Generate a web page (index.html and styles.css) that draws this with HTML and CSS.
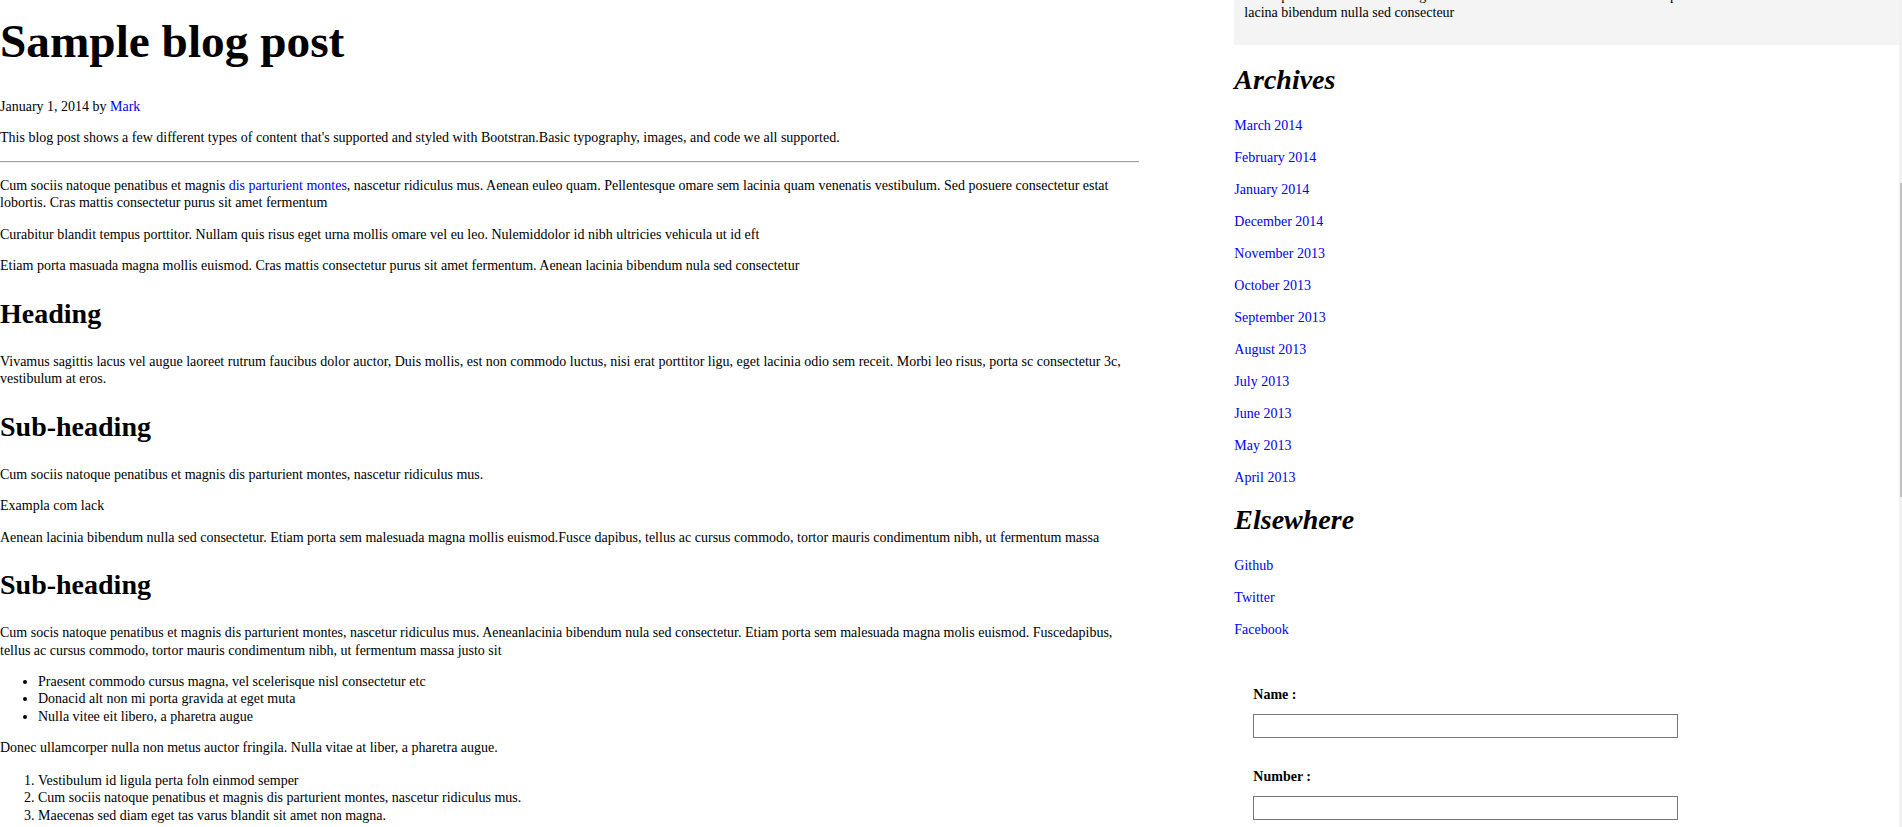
FILE: index.html
```html
<!DOCTYPE html>
<html lang="en">
<head>
<meta charset="utf-8">
<title>Sample blog post</title>
<link rel="stylesheet" href="styles.css">
</head>
<body>
<div class="page">
  <main class="post">
    <h1 class="post-title">Sample blog post</h1>
    <p class="post-meta">January 1, 2014 by <a href="#">Mark</a></p>
    <p>This blog post shows a few different types of content that's supported and styled with Bootstran.Basic typography, images, and code we all supported.</p>
    <hr class="rule">
    <p>Cum sociis natoque penatibus et magnis <a href="#">dis parturient montes</a>, nascetur ridiculus mus. Aenean euleo quam. Pellentesque omare sem lacinia quam venenatis vestibulum. Sed posuere consectetur estat lobortis. Cras mattis consectetur purus sit amet fermentum</p>
    <p>Curabitur blandit tempus porttitor. Nullam quis risus eget urna mollis omare vel eu leo. Nulemiddolor id nibh ultricies vehicula ut id eft</p>
    <p>Etiam porta masuada magna mollis euismod. Cras mattis consectetur purus sit amet fermentum. Aenean lacinia bibendum nula sed consectetur</p>
    <h2 class="section-title">Heading</h2>
    <p>Vivamus sagittis lacus vel augue laoreet rutrum faucibus dolor auctor, Duis mollis, est non commodo luctus, nisi erat porttitor ligu, eget lacinia odio sem receit. Morbi leo risus, porta sc consectetur 3c, vestibulum at eros.</p>
    <h2 class="section-title">Sub-heading</h2>
    <p>Cum sociis natoque penatibus et magnis dis parturient montes, nascetur ridiculus mus.</p>
    <p>Exampla com lack</p>
    <p>Aenean lacinia bibendum nulla sed consectetur. Etiam porta sem malesuada magna mollis euismod.Fusce dapibus, tellus ac cursus commodo, tortor mauris condimentum nibh, ut fermentum massa</p>
    <h2 class="section-title">Sub-heading</h2>
    <p>Cum socis natoque penatibus et magnis dis parturient montes, nascetur ridiculus mus. Aeneanlacinia bibendum nula sed consectetur. Etiam porta sem malesuada magna molis euismod. Fuscedapibus, tellus ac cursus commodo, tortor mauris condimentum nibh, ut fermentum massa justo sit</p>
    <ul class="bullets">
      <li>Praesent commodo cursus magna, vel scelerisque nisl consectetur etc</li>
      <li>Donacid alt non mi porta gravida at eget muta</li>
      <li>Nulla vitee eit libero, a pharetra augue</li>
    </ul>
    <p>Donec ullamcorper nulla non metus auctor fringila. Nulla vitae at liber, a pharetra augue.</p>
    <ol class="numbers">
      <li>Vestibulum id ligula perta foln einmod semper</li>
      <li>Cum sociis natoque penatibus et magnis dis parturient montes, nascetur ridiculus mus.</li>
      <li>Maecenas sed diam eget tas varus blandit sit amet non magna.</li>
    </ol>
  </main>

  <aside class="sidebar">
    <div class="about-box">
      <p>Etiam porta sem malesuada magna mollis euismod. Cras mattis consectetur purus sit amet fermentum. Aenean lacina bibendum nulla sed consecteur</p>
    </div>

    <h2 class="side-title">Archives</h2>
    <ul class="side-links">
      <li><a href="#">March 2014</a></li>
      <li><a href="#">February 2014</a></li>
      <li><a href="#">January 2014</a></li>
      <li><a href="#">December 2014</a></li>
      <li><a href="#">November 2013</a></li>
      <li><a href="#">October 2013</a></li>
      <li><a href="#">September 2013</a></li>
      <li><a href="#">August 2013</a></li>
      <li><a href="#">July 2013</a></li>
      <li><a href="#">June 2013</a></li>
      <li><a href="#">May 2013</a></li>
      <li><a href="#">April 2013</a></li>
    </ul>

    <h2 class="side-title">Elsewhere</h2>
    <ul class="side-links">
      <li><a href="#">Github</a></li>
      <li><a href="#">Twitter</a></li>
      <li><a href="#">Facebook</a></li>
    </ul>

    <form class="contact-form">
      <div class="field">
        <label class="field-label" for="name">Name :</label>
        <input class="field-input" id="name" type="text">
      </div>
      <div class="field">
        <label class="field-label" for="number">Number :</label>
        <input class="field-input" id="number" type="text">
      </div>
    </form>
  </aside>
</div>
<div class="scrollbar"><div class="scrollbar-thumb"></div></div>
</body>
</html>
```

FILE: styles.css
```css
html, body {
  margin: 0;
  padding: 0;
  background: #ffffff;
  overflow: hidden;
}

body {
  padding-right: 3px;
  font-family: "Liberation Serif", "Times New Roman", serif;
  font-size: 14px;
  line-height: 17px;
  color: #000000;
}

a {
  color: #0000ee;
  text-decoration: none;
}

p {
  margin: 14px 0;
}

.page {
  display: flex;
  align-items: flex-start;
}

.post {
  width: 60%;
  flex: none;
  line-height: 17.2px;
}

.post p {
  margin: 14.25px 0;
}

.post-title {
  font-size: 47.3px;
  line-height: normal;
  font-weight: bold;
  margin: 14px 0 30px;
}

.post .post-meta {
  margin-top: 0;
}

.rule {
  border: 0;
  border-top: 1px solid #a0a0a0;
  border-bottom: 1px solid #eeeeee;
  height: 0;
  margin: 14.25px 0;
}

.section-title {
  font-size: 28px;
  line-height: normal;
  font-weight: bold;
  margin: 23.5px 0 23px;
}

.bullets {
  margin: 14px 0;
  padding-left: 38px;
}

.numbers {
  margin: 16px 0 14px;
  padding-left: 38px;
}

.sidebar {
  width: 35%;
  margin-left: 5%;
  flex: none;
}

.about-box {
  background: #f4f4f4;
  padding: 0 10px 10px;
  margin-top: -13px;
  margin-bottom: 19px;
}

.about-box p {
  margin: 0 0 14px;
}

.side-title {
  font-size: 28px;
  line-height: normal;
  font-style: italic;
  font-weight: bold;
  margin: 17px 0 21px;
}

.side-links {
  list-style: none;
  margin: 0;
  padding: 0;
}

.side-links li {
  line-height: 18px;
  margin: 14px 0;
}

.contact-form {
  margin-top: 47px;
  padding-left: 19px;
}

.field {
  margin-bottom: 30px;
}

.field-label {
  display: block;
  font-weight: bold;
  line-height: 17px;
}

.field-input {
  display: block;
  box-sizing: border-box;
  width: 425px;
  height: 24px;
  margin-top: 11px;
  border: 1px solid #767676;
  padding: 1px 2px;
  font: inherit;
  background: #ffffff;
}

.scrollbar {
  position: fixed;
  top: 0;
  right: 0;
  width: 3px;
  height: 100vh;
  background: #f1f1f1;
}

.scrollbar-thumb {
  position: absolute;
  top: 183px;
  right: 0;
  width: 2px;
  height: 314px;
  background: #c1c1c1;
}
```
